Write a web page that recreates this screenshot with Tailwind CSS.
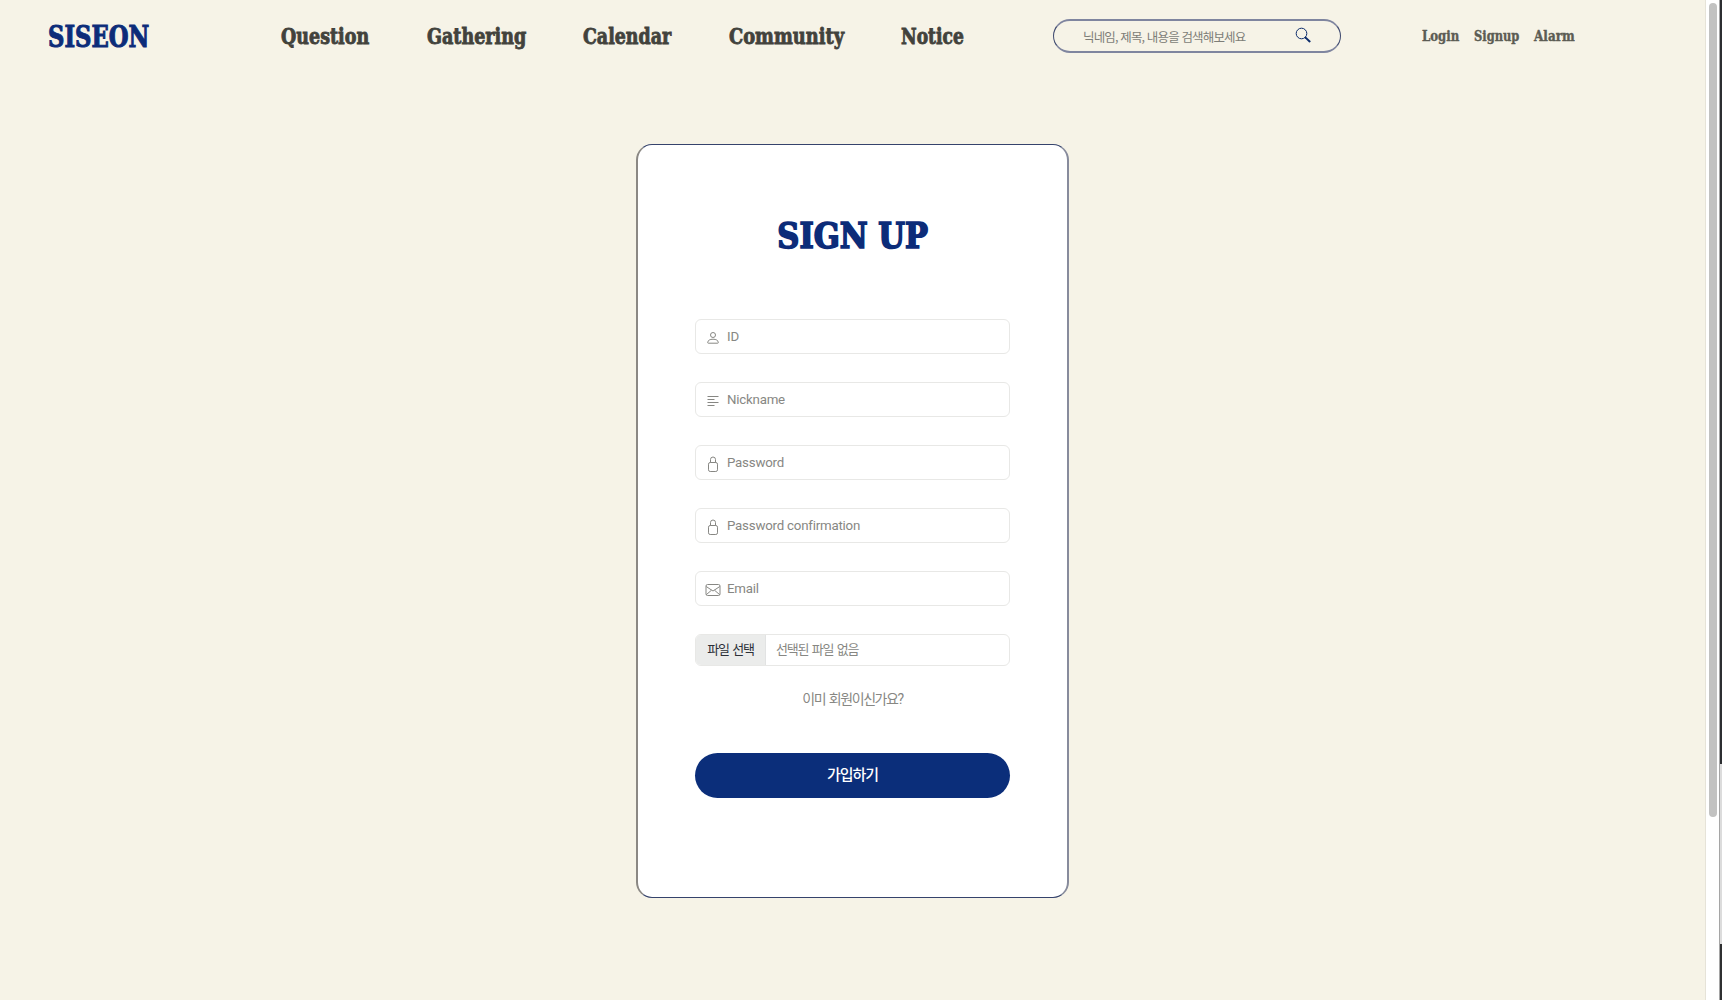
<!DOCTYPE html>
<html lang="ko">
<head>
<meta charset="utf-8">
<title>SISEON</title>
<script src="https://cdn.jsdelivr.net/npm/@tailwindcss/browser@4"></script>
</head>
<body class="h-screen overflow-hidden flex bg-[#f6f3e7] font-[Roboto,'Noto_Sans_CJK_KR',sans-serif]">
<div class="w-[1706px] h-full flex flex-col border-r border-[#e6e3d8]">
  <header class="h-[72px] flex items-center font-['DejaVu_Serif_Condensed','DejaVu_Serif',serif] [font-stretch:condensed] font-bold whitespace-nowrap text-[#42423c]">
    <a class="ml-12 mt-1 w-[233px] text-[29px] text-[#0c2c79] [-webkit-text-stroke:1px_#0c2c79]"><span class="inline-block origin-left scale-x-[.87]">SISEON</span></a>
    <nav class="flex text-[22px] w-[772px] [-webkit-text-stroke:0.8px_#42423c]">
      <a class="w-[146px]"><span class="inline-block origin-left scale-x-[.885]">Question</span></a>
      <a class="w-[156px]"><span class="inline-block origin-left scale-x-[.885]">Gathering</span></a>
      <a class="w-[146px]"><span class="inline-block origin-left scale-x-[.88]">Calendar</span></a>
      <a class="w-[172px]"><span class="inline-block origin-left scale-x-[.9]">Community</span></a>
      <a><span class="inline-block origin-left scale-x-[.865]">Notice</span></a>
    </nav>
    <form class="w-[288px] h-[34px] rounded-full border-x border-y-2 border-x-[#3f4a70] border-y-[#7f859f] flex items-center justify-between px-[29px] font-['Noto_Sans_CJK_KR',sans-serif] font-normal">
      <span class="mt-0.5 text-[12.5px] tracking-[-0.85px] text-[#7d7d77]">닉네임, 제목, 내용을 검색해보세요</span>
      <svg class="size-4 -mt-0.5" viewBox="0 0 16 16" fill="none" stroke="#0c2c6b"><circle cx="6.5" cy="6.5" r="5.3" stroke-width="1"/><path d="M10.6 10.6 14.6 14.4" stroke-width="2" stroke-linecap="round"/></svg>
    </form>
    <div class="flex text-[15px] ml-[81px] text-[#5c5c54] [-webkit-text-stroke:0.4px_#5c5c54]">
      <a class="w-[52px]"><span class="inline-block origin-left scale-x-[.87]">Login</span></a>
      <a class="w-[60px]"><span class="inline-block origin-left scale-x-[.85]">Signup</span></a>
      <a><span class="inline-block origin-left scale-x-[.89]">Alarm</span></a>
    </div>
  </header>
  <main class="ml-[636px] mt-[72px] w-[433px] h-[754px] rounded-2xl bg-white border-y border-x-2 border-y-[#35436c] border-l-[#8b8884] border-r-[#878b9c] px-[57px] flex flex-col items-center text-[#878783]">
    <h1 class="mt-[65px] h-[52px] leading-[52px] text-[35px] font-bold text-[#0c2c79] whitespace-nowrap font-['DejaVu_Serif_Condensed','DejaVu_Serif',serif] [font-stretch:condensed] [-webkit-text-stroke:1.6px_#0c2c79]"><span class="inline-block scale-x-[.97]">SIGN UP</span></h1>
    <div class="mt-[57px] w-[315px] flex flex-col gap-7 text-[13.3px] tracking-[-0.22px]">
      <label class="h-[35px] rounded-md border border-[#e8e8e6] flex items-center pl-[9px] gap-[6px]">
        <svg class="size-4 mt-0.5" viewBox="0 0 16 16" fill="none" stroke="currentColor"><circle cx="8" cy="5" r="2.5"/><path d="M2.7 12.6c0-2.2 2.2-3.4 5.3-3.4s5.3 1.2 5.3 3.4q0 .6-.6.6H3.3q-.6 0-.6-.6Z"/></svg><span>ID</span></label>
      <label class="h-[35px] rounded-md border border-[#e8e8e6] flex items-center pl-[9px] gap-[6px]">
        <svg class="size-4 mt-0.5" viewBox="0 0 16 16" fill="none" stroke="currentColor"><path d="M2.5 3.5h11M2.5 6.5h7M2.5 9.5h11M2.5 12.5h7"/></svg><span>Nickname</span></label>
      <label class="h-[35px] rounded-md border border-[#e8e8e6] flex items-center pl-[9px] gap-[6px]">
        <svg class="size-4 mt-0.5" viewBox="0 0 16 16" fill="none" stroke="currentColor"><rect x="3.5" y="6.500" width="9" height="9" rx="1.7"/><path d="M5.5 6.500V3.500a2.500 2.500 0 0 1 5 0v3"/></svg><span>Password</span></label>
      <label class="h-[35px] rounded-md border border-[#e8e8e6] flex items-center pl-[9px] gap-[6px]">
        <svg class="size-4 mt-0.5" viewBox="0 0 16 16" fill="none" stroke="currentColor"><rect x="3.5" y="6.500" width="9" height="9" rx="1.7"/><path d="M5.5 6.500V3.500a2.500 2.500 0 0 1 5 0v3"/></svg><span>Password confirmation</span></label>
      <label class="h-[35px] rounded-md border border-[#e8e8e6] flex items-center pl-[9px] gap-[6px]">
        <svg class="size-4 mt-0.5" viewBox="0 0 16 16" fill="none" stroke="currentColor"><rect x="1" y="2.5" width="14" height="11" rx="1.5"/><path d="m1.2 4.500 6.800 4.500 6.800-4.500M1.300 12.700l5.200-4.500M14.700 12.700 9.500 8.200"/></svg><span>Email</span></label>
      <div class="h-8 rounded-md border border-[#e8e8e6] flex items-center overflow-hidden whitespace-nowrap text-[13px] tracking-[-1.2px] [word-spacing:1.5px]">
        <span class="w-[70px] h-full bg-[#ebeceb] border-r border-[#e2e3e3] text-[#2c3038] flex items-center justify-center">파일 선택</span>
        <span class="ml-2.5">선택된 파일 없음</span>
      </div>
    </div>
    <a class="mt-[23px] h-5 leading-5 text-[14px] tracking-[-1.4px] [word-spacing:1.5px]">이미 회원이신가요?</a>
    <button class="mt-[44px] w-[315px] h-[45px] rounded-full bg-[#0b2e7a] text-white text-[15px] tracking-[-1px] font-medium pb-0.5"><span class="inline-block translate-y-px">가입하기</span></button>
  </main>
</div>
<aside class="w-[13px] h-full bg-white pt-[3px] pl-[3px]"><div class="w-2 h-[814px] rounded-full bg-[#c2c2c1]"></div></aside>
<div class="w-[3px] h-full flex flex-col border-l border-[#a5a5a5]">
  <div class="h-[764px] bg-[#2c2e31]"></div><div class="h-[180px] bg-[#dcdcdc]"></div><div class="flex-1 bg-[#2f3031]"></div>
</div>
</body>
</html>
